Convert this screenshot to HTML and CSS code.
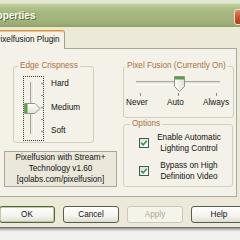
FILE: index.html
```html
<!DOCTYPE html>
<html lang="en">
<head>
<meta charset="utf-8">
<title>Properties</title>
<link rel="stylesheet" href="styles.css">
</head>
<body>
<div class="dialog">
  <div class="titlebar">
    <span class="title">Properties</span>
    <span class="close"></span>
  </div>
  <div class="client">
    <div class="tabs">
      <div class="tab">Pixelfusion Plugin</div>
    </div>
    <div class="panel">
      <div class="col col-left">
        <fieldset class="group edge">
          <legend>Edge Crispness</legend>
          <div class="edge-body">
            <div class="vslider">
              <div class="vtrack"><div class="vgroove"></div></div>
              <div class="vticks"><i></i><i></i><i></i><i></i><i></i></div>
              <svg class="vthumb" width="17" height="11" viewBox="0 0 17 11">
                <defs>
                  <linearGradient id="vthumbFill" x1="0" y1="0" x2="0" y2="1">
                    <stop offset="0" stop-color="#ffffff"/>
                    <stop offset="1" stop-color="#e2e0d3"/>
                  </linearGradient>
                </defs>
                <path d="M0.5 0.5 H11 L16 5.5 L11 10.5 H0.5 Z" fill="url(#vthumbFill)" stroke="#8c9886"/>
                <rect x="1" y="1" width="2.5" height="9" fill="#53a43c"/>
              </svg>
            </div>
            <div class="edge-labels">
              <span>Hard</span>
              <span>Medium</span>
              <span>Soft</span>
            </div>
          </div>
        </fieldset>
        <div class="about">Pixelfusion with Stream+<br>Technology v1.60<br>[qolabs.com/pixelfusion]</div>
      </div>
      <div class="col col-right">
        <fieldset class="group fusion">
          <legend>Pixel Fusion (Currently On)</legend>
          <div class="hslider">
            <div class="hgroove"></div>
            <div class="hticks"><i></i><i></i><i></i></div>
            <svg class="hthumb" width="11" height="16" viewBox="0 0 11 16">
              <defs>
                <linearGradient id="hthumbFill" x1="0" y1="0" x2="1" y2="0">
                  <stop offset="0" stop-color="#ffffff"/>
                  <stop offset="1" stop-color="#e2e0d3"/>
                </linearGradient>
              </defs>
              <path d="M0.5 0.5 H10.5 V10.5 L5.5 15.5 L0.5 10.5 Z" fill="url(#hthumbFill)" stroke="#8c9886"/>
              <rect x="1" y="1" width="9" height="2.5" fill="#53a43c"/>
            </svg>
          </div>
          <div class="fusion-labels">
            <span>Never</span>
            <span>Auto</span>
            <span>Always</span>
          </div>
        </fieldset>
        <fieldset class="group options">
          <legend>Options</legend>
          <div class="opt">
            <span class="cb"><svg width="8" height="8" viewBox="0 0 8 8"><path d="M1.3 3.9 L3.2 5.9 L6.7 1.8" fill="none" stroke="#27a02a" stroke-width="1.6"/></svg></span>
            <span class="opt-text">Enable Automatic<br>Lighting Control</span>
          </div>
          <div class="opt">
            <span class="cb"><svg width="8" height="8" viewBox="0 0 8 8"><path d="M1.3 3.9 L3.2 5.9 L6.7 1.8" fill="none" stroke="#27a02a" stroke-width="1.6"/></svg></span>
            <span class="opt-text">Bypass on High<br>Definition Video</span>
          </div>
        </fieldset>
      </div>
    </div>
    <div class="buttons">
      <button class="btn default">OK</button>
      <button class="btn">Cancel</button>
      <button class="btn disabled">Apply</button>
      <button class="btn">Help</button>
    </div>
  </div>
</div>
</body>
</html>
```
FILE: styles.css
```css
* {
  box-sizing: border-box;
}

html,
body {
  margin: 0;
  height: 100%;
}

body {
  background: #f1f1ef;
  overflow: hidden;
  font-family: "Liberation Sans", Arial, sans-serif;
  font-size: 8.2px;
  color: #111;
}

/* window frame */
.dialog {
  width: 270px;
  margin-left: -16px;
  border-bottom: 1px solid #6f6f62;
  box-shadow: 0 1px 3px rgba(0, 0, 0, 0.55);
}

.titlebar {
  height: 27px;
  display: flex;
  align-items: flex-start;
  padding: 0 4px 0 2px;
  background: linear-gradient(to bottom,
    #e2e6d4 0, #e2e6d4 3px,
    #c6d2a6 4px, #b2c38d 7px,
    #a6b880 12px, #a2b47c 20px,
    #98ab70 25px, #8b9f63 27px);
}

.title {
  margin-top: 10px;
  font-size: 10px;
  line-height: 12px;
  font-weight: bold;
  color: #fbfbf4;
  text-shadow: 1px 1px 0 #5b6b3f;
}

.close {
  margin-left: auto;
  margin-top: 9px;
  width: 16px;
  height: 16px;
  border: 1px solid #f1e2d6;
  border-radius: 3px;
  background: linear-gradient(to bottom, #e08a66, #c9532f 50%, #b6411f);
}

.client {
  background: #ece9d8;
  padding: 3px 0 4px;
}

/* tab strip */
.tabs {
  display: flex;
  padding-left: 6px;
}

.tab {
  position: relative;
  z-index: 1;
  width: 75px;
  height: 19px;
  padding: 0 0 0 4px;
  border: 1px solid #9a9f92;
  border-top: 1px solid #e0913a;
  border-bottom: none;
  border-radius: 3px 3px 0 0;
  box-shadow: inset 0 1px 0 #f6c46c;
  background: #f4f2e8;
  line-height: 17px;
  white-space: nowrap;
}

.panel {
  margin: -1px 0 0 8px;
  width: 245px;
  height: 149px;
  border: 1px solid #a7ab9d;
  background: #f4f2e8;
  display: grid;
  grid-template-columns: 123px 1fr;
}

.col {
  display: flex;
  flex-direction: column;
}

/* group boxes */
.group {
  margin: 0;
  padding: 0;
  min-width: 0;
  border: 1px solid #d0d0bf;
  border-radius: 3px;
}

.group legend {
  padding: 0 2px;
  line-height: 10px;
  color: #a8703c;
  white-space: nowrap;
}

.edge {
  margin: 12px 0 0 20px;
  width: 81px;
  height: 82px;
}

.edge legend {
  margin-left: 4px;
}

.edge-body {
  display: flex;
  margin: 5px 0 0 9px;
}

.vslider {
  position: relative;
  width: 21px;
  height: 65px;
  border: 1px dotted #3a3a3a;
  display: flex;
  padding: 5px 0 6px;
}

.vtrack {
  display: flex;
  padding-left: 6px;
}

.vgroove {
  width: 4px;
  border-left: 1px solid #a5a597;
  border-right: 1px solid #ffffff;
  background: #e9e7dc;
}

.vticks {
  margin-left: 7px;
  display: flex;
  flex-direction: column;
  justify-content: space-between;
  padding: 1px 0 2px;
}

.vticks i {
  display: block;
  width: 2px;
  height: 1px;
  background: #8a8a80;
}

.vthumb {
  position: absolute;
  left: 0;
  top: 26px;
}

.edge-labels {
  display: flex;
  flex-direction: column;
  justify-content: space-between;
  margin-left: 7px;
  padding: 3px 0 5px;
  line-height: 10px;
}

.about {
  margin: 8px 0 0 11px;
  width: 113px;
  height: 36px;
  border: 1px solid #aca899;
  background: #ebe8db;
  text-align: center;
  line-height: 11px;
  white-space: nowrap;
}

.fusion {
  margin: 12px 0 0 7px;
  width: 111px;
  height: 57px;
}

.fusion legend {
  margin-left: 1px;
}

.hslider {
  position: relative;
  margin: 4px 0 0 12px;
  width: 84px;
  height: 21px;
  display: flex;
  flex-direction: column;
}

.hgroove {
  margin-top: 6px;
  height: 4px;
  border-top: 1px solid #a5a597;
  border-bottom: 1px solid #ffffff;
  background: #e9e7dc;
}

.hticks {
  margin-top: 8px;
  display: flex;
  justify-content: space-between;
  padding: 0 3px 0 4px;
}

.hticks i {
  display: block;
  width: 1px;
  height: 3px;
  background: #8a8a80;
}

.hthumb {
  position: absolute;
  left: 38px;
  top: 1px;
}

.fusion-labels {
  display: flex;
  justify-content: space-between;
  margin: 2px 0 0 2px;
  width: 103px;
  line-height: 10px;
}

.options {
  margin: 1px 0 0 7px;
  width: 110px;
  height: 68px;
  padding-top: 3px;
}

.options legend {
  margin-left: 6px;
}

.opt {
  display: flex;
  align-items: center;
  margin-left: 15px;
}

.opt + .opt {
  margin-top: 6px;
}

.cb {
  width: 10px;
  height: 10px;
  border: 1px solid #3e5868;
  background: linear-gradient(135deg, #dcdcd2, #ffffff);
  display: flex;
  align-items: center;
  justify-content: center;
}

.cb svg {
  display: block;
}

.opt-text {
  margin-left: 5px;
  width: 70px;
  text-align: center;
  line-height: 11px;
  white-space: nowrap;
}

/* dialog buttons */
.buttons {
  display: flex;
  gap: 8px;
  margin: 9px 0 0 15px;
}

.btn {
  width: 56px;
  height: 17px;
  padding: 0;
  border: 1px solid #55604a;
  border-radius: 3px;
  background: linear-gradient(to bottom, #ffffff, #f4f3ee 60%, #dedcd1);
  font: inherit;
  color: #111;
  display: flex;
  align-items: center;
  justify-content: center;
}

.btn.default {
  box-shadow: inset 0 0 0 1px #bcd295;
}

.btn.disabled {
  border-color: #c9c7ba;
  background: #f5f4ea;
  color: #aca899;
}
```
